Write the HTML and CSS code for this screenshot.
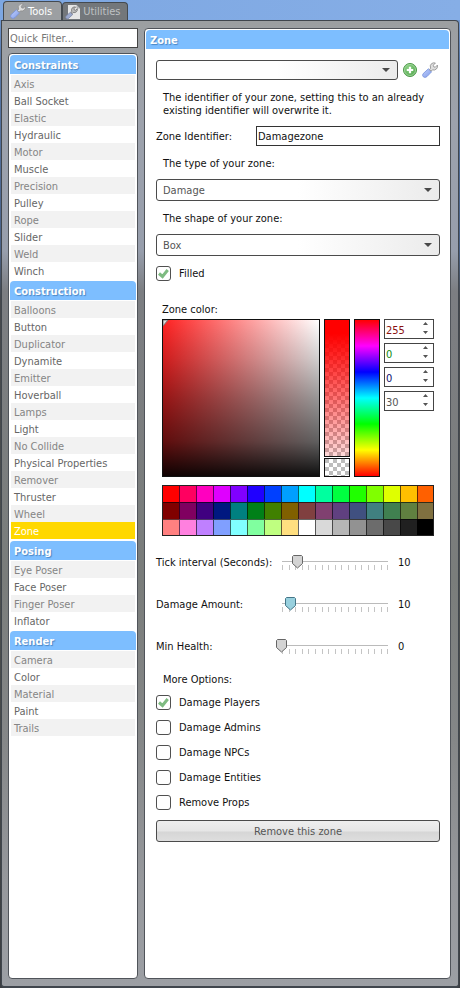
FILE: index.html
```html
<!DOCTYPE html>
<html lang="en">
<head>
<meta charset="utf-8">
<meta name="viewport" content="width=device-width, initial-scale=1">
<title>Tools</title>
<link rel="stylesheet" href="styles.css">
</head>
<body>
<svg class="defs" width="0" height="0" aria-hidden="true">
  <defs>
    <linearGradient id="handle" x1="0" y1="0" x2="1" y2="1">
      <stop offset="0" stop-color="#c5d3fb"/><stop offset="1" stop-color="#7c98ea"/>
    </linearGradient>
    <radialGradient id="plus" cx=".4" cy=".35" r=".7">
      <stop offset="0" stop-color="#8fd487"/><stop offset="1" stop-color="#4fa44b"/>
    </radialGradient>
    <symbol id="wrench" viewBox="0 0 16 16">
      <path d="M1.200 11.600 6.400 6.800 9.600 9.800 5 14.600 Q3 16.200 1.300 14.800 Q-.1 13.200 1.200 11.600Z" fill="url(#handle)" stroke="#7590dc" stroke-width=".8"/>
      <path d="M7.600 7.600 8.600 6.200 Q7.400 3.400 9.600 1.600 Q11.200 .4 13.400 1 L11.300 3.200 11.700 4.800 13.300 5.200 15.400 3.100 Q16 5.400 14.400 7 Q12.600 8.600 10.300 7.900 L9 9.200Z" fill="#dedede" stroke="#8c8c8c" stroke-width=".8"/>
    </symbol>
  </defs>
</svg>
<div class="window">
  <nav class="tabs" aria-label="Spawn menu">
    <button class="tab tab-active" type="button"><svg class="icon"><use href="#wrench"/></svg>Tools</button>
    <button class="tab" type="button"><svg class="icon" viewBox="0 0 16 16"><path d="M3 1h8.500L15 4.500V15H3z" fill="#e6e6e6"/><path d="M11.500 1v3.500H15z" fill="#aeb0b2"/><path d="M1 12 5.500 8.200 7.800 10.400 3.600 14.400Q2.300 15.500 1.100 14.400 0 13.200 1 12z" fill="#9aa8cc" stroke="#75809e" stroke-width=".7"/><path d="M6 8.500 6.700 7.500Q5.900 5 7.600 3.600 9 2.600 10.600 3L9 4.700 9.300 6 10.700 6.300 12.300 4.700Q12.700 6.600 11.400 7.800 10 9 8.200 8.500L7.200 9.600z" fill="#bbb" stroke="#6e6e6e" stroke-width=".8"/></svg>Utilities</button>
  </nav>
  <div class="frame">
    <aside class="sidebar">
      <input class="filter" type="text" placeholder="Quick Filter..." aria-label="Quick Filter">
      <div class="panel list">
        <section><h2>Constraints</h2>
          <ul><li><a href="#">Axis</a></li><li><a href="#">Ball Socket</a></li><li><a href="#">Elastic</a></li><li><a href="#">Hydraulic</a></li><li><a href="#">Motor</a></li><li><a href="#">Muscle</a></li><li><a href="#">Precision</a></li><li><a href="#">Pulley</a></li><li><a href="#">Rope</a></li><li><a href="#">Slider</a></li><li><a href="#">Weld</a></li><li><a href="#">Winch</a></li></ul>
        </section>
        <section><h2>Construction</h2>
          <ul><li><a href="#">Balloons</a></li><li><a href="#">Button</a></li><li><a href="#">Duplicator</a></li><li><a href="#">Dynamite</a></li><li><a href="#">Emitter</a></li><li><a href="#">Hoverball</a></li><li><a href="#">Lamps</a></li><li><a href="#">Light</a></li><li><a href="#">No Collide</a></li><li><a href="#">Physical Properties</a></li><li><a href="#">Remover</a></li><li><a href="#">Thruster</a></li><li><a href="#">Wheel</a></li><li><a class="selected" href="#" aria-current="true">Zone</a></li></ul>
        </section>
        <section><h2>Posing</h2>
          <ul><li><a href="#">Eye Poser</a></li><li><a href="#">Face Poser</a></li><li><a href="#">Finger Poser</a></li><li><a href="#">Inflator</a></li></ul>
        </section>
        <section><h2>Render</h2>
          <ul><li><a href="#">Camera</a></li><li><a href="#">Color</a></li><li><a href="#">Material</a></li><li><a href="#">Paint</a></li><li><a href="#">Trails</a></li></ul>
        </section>
      </div>
    </aside>
    <main class="panel">
      <h1>Zone</h1>
      <form class="form">
        <div class="presets">
          <select class="combo combo-small" aria-label="Preset"><option></option></select>
          <button class="icon-button" type="button" aria-label="Add preset"><svg class="icon" viewBox="0 0 16 16"><circle cx="8" cy="8" r="6.500" fill="url(#plus)" stroke="#4c9a48"/><circle cx="8" cy="8" r="5.500" fill="none" stroke="#b4e0b0" stroke-width=".7"/><path d="M8 4.800v6.400M4.800 8h6.400" stroke="#fff" stroke-width="2.200"/></svg></button>
          <button class="icon-button" type="button" aria-label="Edit presets"><svg class="icon"><use href="#wrench"/></svg></button>
        </div>
        <p class="help">The identifier of your zone, setting this to an already existing identifier will overwrite it.</p>
        <div class="field"><label for="ident">Zone Identifier:</label><input class="text" id="ident" type="text" value="Damagezone"></div>
        <label class="caption" for="type">The type of your zone:</label>
        <select class="combo" id="type"><option>Damage</option></select>
        <label class="caption" for="shape">The shape of your zone:</label>
        <select class="combo" id="shape"><option>Box</option></select>
        <label class="check"><input type="checkbox" checked>Filled</label>
        <fieldset class="color">
          <legend>Zone color:</legend>
          <div class="mixer">
            <div class="shade"><svg viewBox="0 0 6 6" width="6" height="6"><path d="M0 0h5L0 6z" fill="#ddd" stroke="#777"/></svg></div>
            <div class="alpha"><div class="alpha-top"></div><div class="alpha-rest"></div></div>
            <div class="hue"></div>
            <div class="channels">
              <input class="red" type="number" value="255" aria-label="Red">
              <input class="green" type="number" value="0" aria-label="Green">
              <input class="blue" type="number" value="0" aria-label="Blue">
              <input type="number" value="30" aria-label="Alpha">
            </div>
          </div>
          <div class="palette" id="palette"></div>
        </fieldset>
        <div class="slider"><label for="tick">Tick interval (Seconds):</label><input id="tick" type="range" min="0" max="100" value="15"><output for="tick">10</output></div>
        <div class="slider"><label for="amount">Damage Amount:</label><input class="hot" id="amount" type="range" min="0" max="100" value="8"><output for="amount">10</output></div>
        <div class="slider"><label for="health">Min Health:</label><input id="health" type="range" min="0" max="100" value="0"><output for="health">0</output></div>
        <fieldset class="options">
          <legend>More Options:</legend>
          <label class="check"><input type="checkbox" checked>Damage Players</label>
          <label class="check"><input type="checkbox">Damage Admins</label>
          <label class="check"><input type="checkbox">Damage NPCs</label>
          <label class="check"><input type="checkbox">Damage Entities</label>
          <label class="check"><input type="checkbox">Remove Props</label>
        </fieldset>
        <button class="push" type="button">Remove this zone</button>
      </form>
    </main>
  </div>
</div>
<script src="palette.js"></script>
</body>
</html>
```

FILE: palette.js
```js
const colors = [
  '#ff0000', '#ff0060', '#ff00bf', '#df00ff', '#8000ff', '#2000ff', '#0040ff', '#009fff',
  '#00ffff', '#00ff9f', '#00ff40', '#20ff00', '#80ff00', '#dfff00', '#ffbf00', '#ff6000',
  '#800000', '#800060', '#400080', '#001880', '#008080', '#008018', '#408000', '#806000',
  '#804040', '#804070', '#604080', '#405080', '#408080', '#408050', '#608040', '#807040',
  '#ff8080', '#ff80df', '#bf80ff', '#809fff', '#80ffff', '#80ff9f', '#bfff80', '#ffdf80',
  '#ffffff', '#d9d9d9', '#b6b6b6', '#929292', '#6c6c6c', '#484848', '#202020', '#000000'
];
const palette = document.getElementById('palette');
for (const color of colors) {
  const swatch = document.createElement('button');
  swatch.type = 'button';
  swatch.style.backgroundColor = color;
  swatch.setAttribute('aria-label', color);
  palette.append(swatch);
}
```

FILE: styles.css
```css
* { box-sizing: border-box; }

body {
  margin: 0;
  font: 11px/13px "DejaVu Sans Condensed", "Noto Sans", sans-serif;
  color: #111;
  background: linear-gradient(#7da7e2 0, #5878a8 60px, #4a6288 250px, #45484c 300px, #4c4f4e 600px, #3b3e42 100%);
}

input, select, button { font: inherit; color: inherit; margin: 0; }
h1, h2, p, ul, fieldset { margin: 0; padding: 0; border: 0; }
legend { padding: 0; }
.defs { position: absolute; }
.icon { width: 16px; height: 16px; display: block; }

.window {
  min-height: 100vh;
  padding: 1px 1px 0;
  display: flex;
  flex-direction: column;
  background: linear-gradient(to right, #7da7e2, #86aee6) top / 100% 20px no-repeat;
}

.tabs { display: flex; align-items: flex-end; padding-left: 2px; }
.tab {
  display: flex;
  align-items: center;
  gap: 2px;
  height: 18px;
  padding: 0 7px 0 2px;
  border: 1px solid #444a50;
  border-bottom: 0;
  border-radius: 4px 4px 0 0;
  background: #73777b;
  color: #bfc2c4;
}
.tab-active {
  height: 19px;
  padding: 0 9px 0 6px;
  background: #9c9fa2;
  color: #fff;
}

.frame {
  flex: 1;
  display: grid;
  grid-template-columns: 130px 1fr;
  gap: 6px;
  padding: 7px 7px 7px 6px;
  border: 1px solid #40464d;
  border-width: 1px 1px 2px;
  border-radius: 0 4px 4px 4px;
  background: linear-gradient(#9c9fa1 0, #9da2ac 100px, #979eac 230px, #7c7e82 270px, #7a7d7b 560px, #858788 720px, #96989c 860px, #9c9fa4 100%);
}

.panel {
  border: 1px solid #50545a;
  border-radius: 4px;
  background: #fff;
  padding: 1px;
}

.sidebar { display: flex; flex-direction: column; gap: 5px; }
.filter {
  height: 20px;
  width: 100%;
  padding: 1px 1px 0;
  border: 1px solid #444;
  background: #fff;
}
.filter::placeholder { color: #777; opacity: 1; }
.list { flex: 1; }
section { margin-bottom: 2px; }
ul { list-style: none; margin: 1px 1px 0; }
h1, h2 {
  height: 19px;
  padding-left: 4px;
  border-radius: 4px 4px 0 0;
  background: #7dbeff;
  color: #fff;
  font: bold 11px/22px "DejaVu Sans Condensed", "Noto Sans", sans-serif;
  text-shadow: 1px 1px 1px #4a86c4;
}
li a {
  display: block;
  height: 17px;
  padding-left: 3px;
  line-height: 20px;
  color: #666;
  text-decoration: none;
}
li:nth-child(odd) a { background: #f2f2f2; color: #858585; }
li a.selected { background: #ffd800; color: #fff; }

.form { display: flex; flex-direction: column; padding: 11px 9px 11px 10px; }
.presets { display: flex; align-items: center; gap: 4px; padding-right: 2px; }
.icon-button { padding: 0; border: 0; background: none; }

.combo {
  appearance: none;
  width: 100%;
  height: 22px;
  padding: 0 24px 0 6px;
  border: 1px solid #4b4b4b;
  border-radius: 3px;
  color: #555;
  background:
    url("data:image/svg+xml,%3Csvg xmlns='http://www.w3.org/2000/svg' width='8' height='4'%3E%3Cpath d='M0 0h8L4 4z' fill='%23484848'/%3E%3C/svg%3E") right 7px center no-repeat,
    linear-gradient(to right, #fff 50%, #ebebeb);
}
.combo-small { flex: 1; height: 20px; }

.help { padding: 11px 7px 9px; }
.field { display: grid; grid-template-columns: 100px 1fr; align-items: center; }
.text { height: 20px; width: 100%; padding: 1px 1px 0; border: 1px solid #333; background: #fff; }
.caption { padding: 11px 7px 9px; }

.check { display: flex; align-items: center; gap: 8px; height: 15px; }
.check input {
  appearance: none;
  width: 15px;
  height: 15px;
  border: 1px solid #505050;
  border-radius: 3px;
  background: #fff;
}
.check input:checked {
  background: url("data:image/svg+xml,%3Csvg xmlns='http://www.w3.org/2000/svg' width='11' height='11'%3E%3Cpath d='M1 5.500 4.500 8.500 9.700 2' fill='none' stroke='%237ebb81' stroke-width='3'/%3E%3C/svg%3E") center no-repeat #fff;
}
.combo + .check { margin-top: 10px; }

.color { margin-top: 22px; padding-left: 6px; }
.color legend { margin-bottom: 3px; }
.mixer { display: flex; gap: 4px; height: 158px; }
.shade {
  width: 158px;
  border: 1px solid #111;
  background: linear-gradient(to top, #000000f0, #000000a0 22%, #00000068 50%, #00000030 75%, transparent), linear-gradient(to right, #f22, #fff);
}
.shade svg { display: block; }
.alpha { width: 26px; display: flex; flex-direction: column; gap: 1px; }
.alpha-top, .alpha-rest {
  border: 1px solid #111;
  background: conic-gradient(#fff 25%, #bdbdbd 0 50%, #fff 0 75%, #bdbdbd 0) 0 0 / 8px 8px;
}
.alpha-top {
  flex: 1;
  background: linear-gradient(#f00 10%, #ff000026), conic-gradient(#fff 25%, #bdbdbd 0 50%, #fff 0 75%, #bdbdbd 0) 0 0 / 8px 8px;
}
.alpha-rest { height: 19px; }
.hue {
  width: 26px;
  border: 1px solid #111;
  background: linear-gradient(#f00, #f0f, #00f, #0ff, #0f0, #ff0, #f00);
}
.channels { display: flex; flex-direction: column; gap: 4px; }
.channels input {
  appearance: textfield;
  width: 50px;
  height: 20px;
  padding: 2px 0 0 1px;
  border: 1px solid #444;
  color: #555;
  background: url("data:image/svg+xml,%3Csvg xmlns='http://www.w3.org/2000/svg' width='5' height='12'%3E%3Cpath d='M0 3h5L2.500 0zM0 9h5L2.500 12z' fill='%23555'/%3E%3C/svg%3E") right 5px top 2px no-repeat #fff;
}
.channels input::-webkit-inner-spin-button { appearance: none; margin: 0; }
.channels .red { color: #8a1010; }
.channels .green { color: #108a10; }
.channels .blue { color: #101070; }

.palette {
  display: grid;
  grid-template-columns: repeat(16, 17px);
  grid-auto-rows: 17px;
  width: 272px;
  margin-top: 8px;
  outline: 1px solid #222;
  outline-offset: -1px;
}
.palette button { padding: 0; border: 1px solid #0009; border-width: 1px 0 0 1px; }

.slider {
  display: grid;
  grid-template-columns: 117px 124px 1fr;
  align-items: center;
  height: 42px;
}
.color + .slider { margin-top: 5px; }
.slider input {
  appearance: none;
  width: 124px;
  height: 18px;
  margin-left: 1px;
  background:
    linear-gradient(#bbb, #bbb) 8px 8px / 106px 1px no-repeat,
    url("data:image/svg+xml,%3Csvg xmlns='http://www.w3.org/2000/svg' width='107' height='5'%3E%3Cpath d='M0 0h1v5H0zM7 0h1v5H7zM13 0h1v5h-1zM20 0h1v5h-1zM26 0h1v5h-1zM33 0h1v5h-1zM40 0h1v5h-1zM46 0h1v5h-1zM53 0h1v5h-1zM59 0h1v5h-1zM66 0h1v5h-1zM73 0h1v5h-1zM79 0h1v5h-1zM86 0h1v5h-1zM92 0h1v5h-1zM99 0h1v5h-1zM105 0h1v5h-1z' fill='%23c4c4c4'/%3E%3C/svg%3E") 8px 12px no-repeat;
}
.slider output { padding-left: 1px; }
.slider input::-webkit-slider-runnable-track { height: 16px; }
.slider input::-webkit-slider-thumb {
  appearance: none;
  width: 15px;
  height: 15px;
  background: url("data:image/svg+xml,%3Csvg xmlns='http://www.w3.org/2000/svg' width='15' height='15'%3E%3Cpath d='M3.500 1.500h8l1 1v7l-5 4.500-5-4.500v-7z' fill='%23d4d4d4' stroke='%23666'/%3E%3C/svg%3E") no-repeat;
}
.slider input.hot::-webkit-slider-thumb {
  background-image: url("data:image/svg+xml,%3Csvg xmlns='http://www.w3.org/2000/svg' width='15' height='15'%3E%3Cpath d='M3.500 1.500h8l1 1v7l-5 4.500-5-4.500v-7z' fill='%2398d0de' stroke='%23447688'/%3E%3C/svg%3E");
}

.options { display: flex; flex-direction: column; gap: 10px; margin-top: 6px; }
.options legend { padding-left: 7px; margin-bottom: 9px; }
.push {
  height: 22px;
  margin-top: 10px;
  padding: 0;
  border: 1px solid #4b4b4b;
  border-radius: 3px;
  color: #555;
  background: linear-gradient(#eee, #e6e6e6 50%, #d6d6d6 55%, #dedede);
}
```
